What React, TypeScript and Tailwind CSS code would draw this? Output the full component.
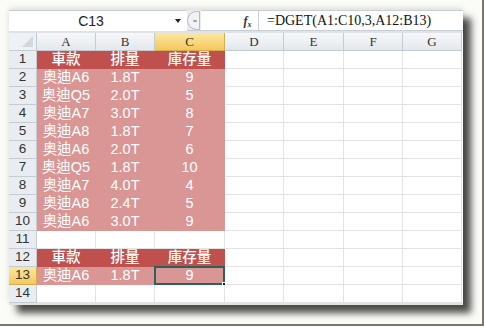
import React from "react";

const cols = ["A", "B", "C", "D", "E", "F", "G"];
const widths = [59, 59, 70, 59, 60, 59, 59];

const rows: { kind: "head" | "data" | "empty"; v?: [string, string, string] }[] = [
  { kind: "head", v: ["車款", "排量", "庫存量"] },
  { kind: "data", v: ["奥迪A6", "1.8T", "9"] },
  { kind: "data", v: ["奥迪Q5", "2.0T", "5"] },
  { kind: "data", v: ["奥迪A7", "3.0T", "8"] },
  { kind: "data", v: ["奥迪A8", "1.8T", "7"] },
  { kind: "data", v: ["奥迪A6", "2.0T", "6"] },
  { kind: "data", v: ["奥迪Q5", "1.8T", "10"] },
  { kind: "data", v: ["奥迪A7", "4.0T", "4"] },
  { kind: "data", v: ["奥迪A8", "2.4T", "5"] },
  { kind: "data", v: ["奥迪A6", "3.0T", "9"] },
  { kind: "empty" },
  { kind: "head", v: ["車款", "排量", "庫存量"] },
  { kind: "data", v: ["奥迪A6", "1.8T", "9"] },
  { kind: "empty" },
];

const cellFont = {
  fontFamily: '"Liberation Sans", "Noto Sans CJK TC", sans-serif',
};

export default function App() {
  return (
    <div className="w-[484px] h-[328px] bg-white">
      <div className="w-[484px] h-[326px] border-r-2 border-b-2 border-[#77776b] bg-[#fbfbf8] pl-[9px] pt-[10px]">
        <div className="w-[454px] bg-white shadow-[8px_8px_7px_rgba(0,0,0,0.7),0_-2px_6px_rgba(0,0,0,0.12)]">
          {/* formula bar */}
          <div className="flex h-[21px] bg-[#e9edf2] border-b border-[#c9cfd6]">
            <div
              className="relative w-[178px] h-[21px] bg-white border-t border-[#c9cfd6] flex items-center justify-center text-[14px] text-[#222]"
              style={cellFont}
            >
              <span className="mr-[14px]">C13</span>
              <span className="absolute right-[6px] top-[8px] w-0 h-0 border-l-[3px] border-r-[3px] border-t-[4px] border-l-transparent border-r-transparent border-t-[#222]" />
            </div>
            <div className="w-[14px] h-[21px] flex items-center">
              <div className="w-[13px] h-[19px] rounded-l-full border border-[#b4bac2] bg-[#f0f2f5] flex items-center justify-center">
                <div className="w-[4px] h-[2px] bg-[#9aa2ab] rounded-full ml-[2px]" />
              </div>
            </div>
            <div className="w-[36px] bg-white border-t border-[#c9cfd6]" />
            <div className="w-[22px] bg-white border-t border-r border-[#c9cfd6] flex items-center justify-center">
              <span className="italic font-bold text-[12px] text-[#333]" style={{ fontFamily: '"Liberation Serif", serif' }}>
                f<sub className="text-[8px]">x</sub>
              </span>
            </div>
            <div
              className="flex-1 bg-white border-t border-[#c9cfd6] flex items-center pl-[8px] text-[14px] text-[#111]"
              style={{ fontFamily: '"Liberation Serif", serif' }}
            >
              =DGET(A1:C10,3,A12:B13)
            </div>
          </div>
          <div className="h-[2px] bg-[#dfe3e8]" />
          {/* column headers */}
          <div className="flex h-[18px]">
            <div className="relative w-[28px] h-[18px] bg-[#eef1f5] border-r border-b border-[#c5cbd3]">
              <svg className="absolute right-[3px] bottom-[3px]" width="11" height="11">
                <polygon points="11,0 11,11 0,11" fill="#d3d8de" />
              </svg>
            </div>
            {cols.map((c, i) => (
              <div
                key={c}
                className={`h-[18px] flex items-center justify-center border-r border-b text-[13px] text-[#333] ${
                  c === "C"
                    ? "bg-gradient-to-b from-[#fce7a0] to-[#f4c85c] border-[#d6ad4c]"
                    : "bg-gradient-to-b from-[#f6f8fa] to-[#e4e8ed] border-[#c5cbd3]"
                }`}
                style={{ width: widths[i], fontFamily: '"Liberation Serif", serif' }}
              >
                {c}
              </div>
            ))}
          </div>
          {/* rows */}
          {rows.map((r, ri) => {
            const n = ri + 1;
            const sel = n === 13;
            return (
              <div key={n} className="flex h-[18px]">
                <div
                  className={`w-[28px] h-[18px] flex items-center justify-center border-r border-b text-[13.5px] text-[#333] ${
                    sel
                      ? "bg-gradient-to-b from-[#fce7a0] to-[#f4c85c] border-[#d6ad4c]"
                      : "bg-[#e9edf2] border-[#c5cbd3]"
                  }`}
                  style={cellFont}
                >
                  {n}
                </div>
                {cols.map((c, ci) => {
                  const colored = ci < 3 && r.kind !== "empty";
                  const bg =
                    r.kind === "head" && ci < 3
                      ? "bg-[#c0504d] border-[#c0504d] font-medium"
                      : colored
                      ? "bg-[#da9694] border-[#da9694]"
                      : "bg-white border-[#e3e3e3]";
                  const isSel = sel && c === "C";
                  return (
                    <div
                      key={c}
                      className={`relative h-[18px] flex items-center justify-center border-r border-b text-[14.5px] leading-none text-white ${bg}`}
                      style={{ width: widths[ci], ...cellFont }}
                    >
                      {colored ? r.v![ci] : ""}
                      {isSel && (
                        <>
                          <div className="absolute left-[-1px] top-[-1px] right-[-1px] bottom-[-1px] border-2 border-[#2a615b]" />
                          <div className="absolute right-[-3px] bottom-[-3px] w-[5px] h-[5px] bg-[#1b1b1b] border border-white" />
                        </>
                      )}
                    </div>
                  );
                })}
              </div>
            );
          })}
          <div className="h-[2px] bg-[#e3e3e3]" />
        </div>
      </div>
    </div>
  );
}
